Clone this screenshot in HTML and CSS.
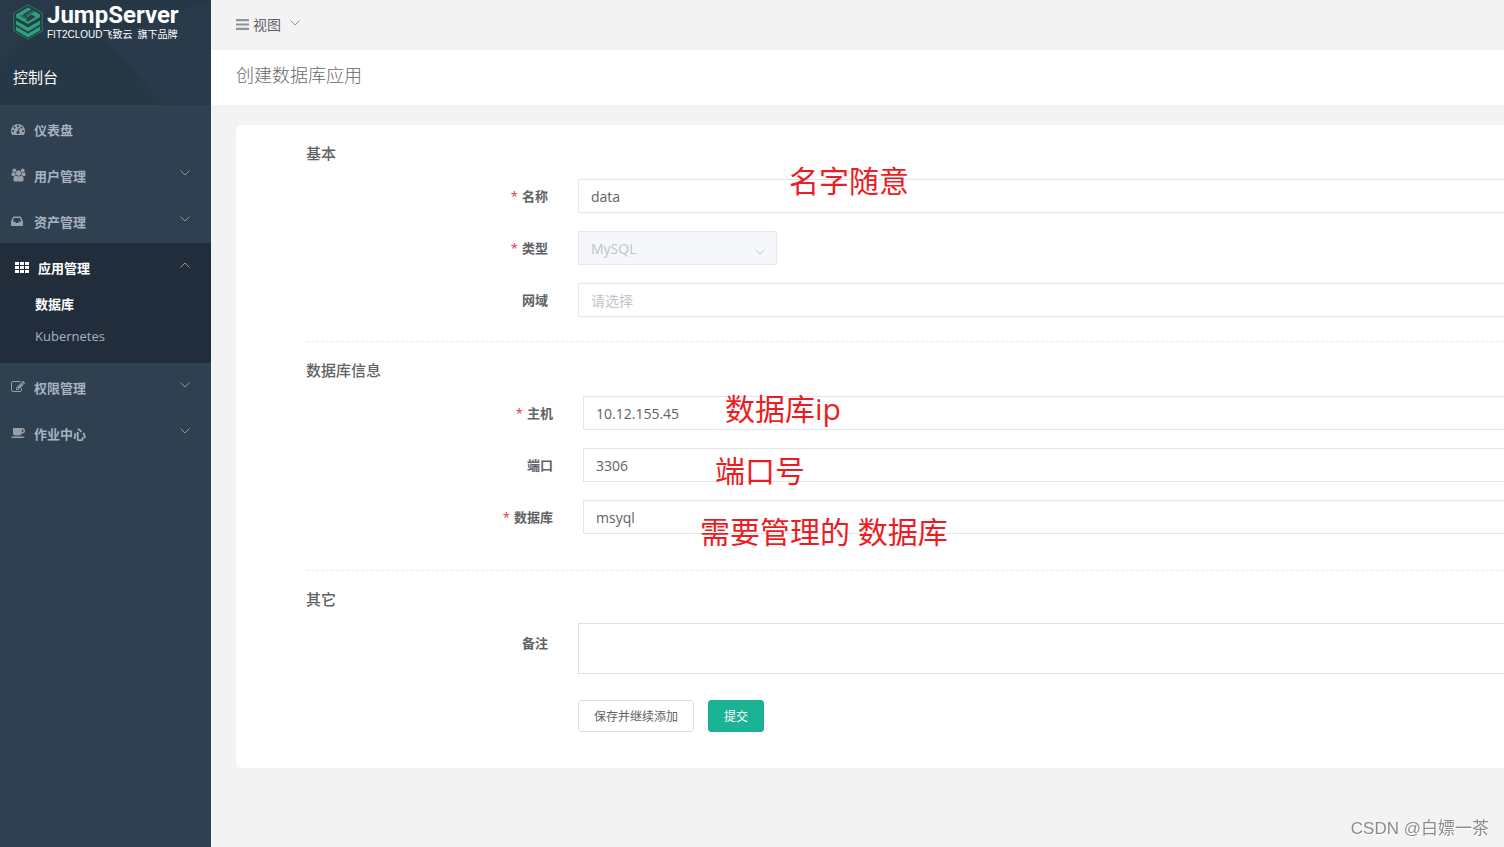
FILE: index.html
```html
<!DOCTYPE html>
<html lang="zh-CN">
<head>
<meta charset="utf-8">
<title>JumpServer</title>
<link rel="stylesheet" href="styles.css">
</head>
<body>
<svg class="defs" aria-hidden="true">
  <symbol id="chevron" viewBox="0 0 10 6"><path d="M.5.5 5 5 9.500.5" fill="none" stroke="currentColor"/></symbol>
</svg>
<div class="app">
  <aside class="sidebar">
    <div class="brand">
      <svg class="facets" viewBox="0 0 211 105" preserveAspectRatio="none" aria-hidden="true">
        <path d="M105 40 128 30 211 0V105H165Z" fill="#2b3c4b" opacity=".7"/>
        <path d="M0 0H60L0 66Z" fill="#2b3c4b" opacity=".5"/>
      </svg>
      <div class="logo">
        <svg class="logo-mark" viewBox="0 0 30 36" aria-hidden="true">
          <path d="M15 .7 29.300 9V27L15 35.300.7 27V9Z" fill="#22413f" stroke="#2a7667"/>
          <g fill="#2f9e82">
            <path d="M3 10.500 15 3.500 18.500 5.500 9 11 15 14.500 12 16.500 3 11.500Z"/>
            <path d="M20 6.500 27 10.500V13L15 20 3 13.500V11.500L15 17.500 22.500 13 18.500 10.500 14.500 13 12 11.500 20 6.500Z"/>
            <path d="M3 16.500 15 23.500 27 16.500V20.500L15 27.500 3 20.500Z"/>
            <path d="M3 22.500 15 29.500 27 22.500V26.500L15 33.500 3 26.500Z"/>
          </g>
          <path d="M7.500 11.500 15 15.500M12.500 12.500 21.500 7" stroke="#22413f"/>
        </svg>
        <div class="logo-text">
          <strong class="logo-name">JumpServer</strong>
          <span class="logo-sub"><span>FIT2CLOUD飞致云</span><span>旗下品牌</span></span>
        </div>
      </div>
      <div class="console">控制台</div>
    </div>
    <nav class="menu">
      <a class="item" href="#">
        <svg class="icon" viewBox="0 0 1792 1792"><path d="M384 1152q0-53-37.500-90.500t-90.500-37.500-90.500 37.500-37.500 90.500 37.500 90.500 90.500 37.500 90.500-37.500 37.500-90.500zm192-448q0-53-37.500-90.500t-90.500-37.500-90.500 37.500-37.500 90.500 37.500 90.500 90.500 37.500 90.500-37.500 37.500-90.500zm428 481l101-382q6-26-7.500-48.500t-38.500-29.500-48 6.500-30 39.500l-101 382q-60 5-107 43.500t-63 98.500q-20 77 20 146t117 89 146-20 89-117q16-60-6-117t-72-91zm660-33q0-53-37.500-90.500t-90.500-37.500-90.500 37.500-37.500 90.500 37.500 90.500 90.500 37.500 90.500-37.500 37.500-90.500zm-640-640q0-53-37.500-90.500t-90.500-37.500-90.500 37.500-37.500 90.500 37.500 90.500 90.500 37.500 90.500-37.500 37.500-90.500zm448 192q0-53-37.500-90.500t-90.500-37.500-90.500 37.500-37.500 90.500 37.500 90.500 90.500 37.500 90.500-37.500 37.500-90.500zm320 448q0 261-141 483-19 29-54 29h-1402q-35 0-54-29-141-221-141-483 0-182 71-348t191-286 286-191 348-71 348 71 286 191 191 286 71 348z"/></svg>
        <span>仪表盘</span>
      </a>
      <a class="item" href="#">
        <svg class="icon wide" viewBox="0 0 2048 1792"><path d="M657 896q-162 5-265 128h-134q-82 0-138-40.500t-56-118.500q0-353 124-353 6 0 43.500 21t97.500 42.500 119 21.500q67 0 133-23-5 37-5 66 0 139 81 256zm1071 637q0 120-73 189.500t-194 69.500h-874q-121 0-194-69.500t-73-189.500q0-53 3.500-103.500t14-109 26.500-108.500 43-97.500 62-81 85.500-53.500 111.500-20q10 0 43 21.500t73 48 107 48 135 21.500 135-21.500 107-48 73-48 43-21.500q61 0 111.500 20t85.500 53.500 62 81 43 97.500 26.500 108.500 14 109 3.500 103.500zm-1024-1277q0 106-75 181t-181 75-181-75-75-181 75-181 181-75 181 75 75 181zm704 384q0 159-112.500 271.500t-271.500 112.500-271.500-112.500-112.500-271.500 112.500-271.500 271.500-112.500 271.500 112.500 112.500 271.500zm576 225q0 78-56 118.500t-138 40.500h-134q-103-123-265-128 81-117 81-256 0-29-5-66 66 23 133 23 59 0 119-21.500t97.500-42.500 43.500-21q124 0 124 353zm-128-609q0 106-75 181t-181 75-181-75-75-181 75-181 181-75 181 75 75 181z"/></svg>
        <span>用户管理</span>
        <svg class="chevron"><use href="#chevron"/></svg>
      </a>
      <a class="item" href="#">
        <svg class="icon" viewBox="0 0 14 14"><path fill-rule="evenodd" d="M2.700 2.500h6.600q.5 0 .7.500L12 7.500V11.500q0 .5-.5.500H.5q-.5 0-.5-.500V7.500L2 3q.2-.5.700-.5zM3.200 4 1.700 7.500H4l.8 1.600h2.400l.8-1.600h2.300L8.800 4z"/></svg>
        <span>资产管理</span>
        <svg class="chevron"><use href="#chevron"/></svg>
      </a>
      <div class="group">
        <a class="item active" href="#">
          <svg class="icon" viewBox="0 0 14 14"><path d="M0 2h4v3H0zM5 2h4v3H5zM10 2h4v3h-4zM0 6h4v3H0zM5 6h4v3H5zM10 6h4v3h-4zM0 10h4v3H0zM5 10h4v3H5zM10 10h4v3h-4z"/></svg>
          <span>应用管理</span>
          <svg class="chevron up"><use href="#chevron"/></svg>
        </a>
        <a class="sub current" href="#">数据库</a>
        <a class="sub" href="#">Kubernetes</a>
      </div>
      <a class="item" href="#">
        <svg class="icon" viewBox="0 0 1792 1792"><path d="M888 1184l116-116-152-152-116 116v56h96v96h56zm440-720q-16-16-33 1l-350 350q-17 17-1 33t33-1l350-350q17-17 1-33zm80 594v190q0 119-84.500 203.500t-203.500 84.500h-832q-119 0-203.500-84.500t-84.500-203.500v-832q0-119 84.500-203.500t203.500-84.500h832q63 0 117 25 15 7 18 23 3 17-9 29l-49 49q-14 14-32 8-23-6-45-6h-832q-66 0-113 47t-47 113v832q0 66 47 113t113 47h832q66 0 113-47t47-113v-126q0-13 9-22l64-64q15-15 35-7t20 29zm-96-738l288 288-672 672h-288v-288zm444 132l-92 92-288-288 92-92q28-28 68-28t68 28l152 152q28 28 28 68t-28 68z"/></svg>
        <span>权限管理</span>
        <svg class="chevron"><use href="#chevron"/></svg>
      </a>
      <a class="item" href="#">
        <svg class="icon" viewBox="0 0 14 14"><path fill-rule="evenodd" d="M2 2h9.300a2.700 2.700 0 0 1 0 5.400h-.5Q10.500 9.500 8.500 9.500H4Q2 9.500 2 7.500zM10.800 3.500v2.400h.5a1.200 1.200 0 0 0 0-2.400zM0 10.500h13.500Q13 12 11.500 12H2Q.5 12 0 10.500z"/></svg>
        <span>作业中心</span>
        <svg class="chevron"><use href="#chevron"/></svg>
      </a>
    </nav>
  </aside>
  <div class="main">
    <header class="topbar">
      <button class="view-switch" type="button">
        <svg class="bars" viewBox="0 0 12 10"><path d="M0 0h12v2H0zM0 4h12v2H0zM0 8h12v2H0z"/></svg>
        <span>视图</span>
        <svg class="chevron"><use href="#chevron"/></svg>
      </button>
    </header>
    <div class="page-title"><h1>创建数据库应用</h1></div>
    <main class="content">
      <form class="card">
        <section class="section">
          <h2>基本</h2>
          <div class="row">
            <label class="required" for="name">名称</label>
            <input id="name" type="text" value="data">
            <span class="note note-name">名字随意</span>
          </div>
          <div class="row">
            <label class="required" for="type">类型</label>
            <div class="select">
              <select id="type" disabled><option>MySQL</option></select>
              <svg class="chevron"><use href="#chevron"/></svg>
            </div>
          </div>
          <div class="row">
            <label for="domain">网域</label>
            <input id="domain" type="text" placeholder="请选择">
          </div>
        </section>
        <section class="section database">
          <h2>数据库信息</h2>
          <div class="row">
            <label class="required" for="host">主机</label>
            <input id="host" type="text" value="10.12.155.45">
            <span class="note note-host">数据库ip</span>
          </div>
          <div class="row">
            <label for="port">端口</label>
            <input id="port" type="text" value="3306">
            <span class="note note-port">端口号</span>
          </div>
          <div class="row">
            <label class="required" for="db">数据库</label>
            <input id="db" type="text" value="msyql">
            <span class="note note-db">需要管理的 数据库</span>
          </div>
        </section>
        <section class="section other">
          <h2>其它</h2>
          <div class="row">
            <label for="comment">备注</label>
            <textarea id="comment"></textarea>
          </div>
          <div class="actions">
            <button class="btn" type="button">保存并继续添加</button>
            <button class="btn primary" type="submit">提交</button>
          </div>
        </section>
      </form>
    </main>
  </div>
</div>
<div class="watermark">CSDN @白嫖一茶</div>
</body>
</html>
```

FILE: styles.css
```css
* { box-sizing: border-box; }

body {
  margin: 0;
  overflow-x: hidden;
  background: #f3f3f3;
  color: #606266;
  font-family: "Open Sans", "Noto Sans CJK SC", sans-serif;
  font-size: 13px;
}

a { color: inherit; text-decoration: none; }
button, input, select, textarea { font: inherit; color: inherit; }
.defs { position: absolute; width: 0; height: 0; }

.app { display: flex; min-height: 100vh; }

/* Sidebar */
.sidebar { flex: 0 0 211px; background: #2f4050; }
.brand {
  position: relative;
  height: 105px;
  padding: 3px 13px 0;
  background: #263746;
  color: #fff;
}
.facets { position: absolute; inset: 0; width: 100%; height: 100%; }
.logo { position: relative; display: flex; gap: 4px; }
.logo-mark { width: 30px; height: 36px; margin-top: 1px; }
.logo-text { display: flex; flex-direction: column; }
.logo-name {
  font-family: Roboto, sans-serif;
  font-size: 24px;
  line-height: 25px;
  font-weight: 700;
}
.logo-sub {
  display: flex;
  gap: 5px;
  font: 10px/14px "Liberation Sans", "Noto Sans CJK SC", sans-serif;
}
.console { position: relative; margin-top: 25px; font-size: 15px; line-height: 20px; }

.item {
  display: flex;
  align-items: center;
  height: 46px;
  padding: 2px 21px 0 11px;
  gap: 9px;
  color: #a7b1c2;
  font-weight: 600;
}
.icon { width: 14px; height: 14px; fill: #9a9ea5; }
.icon.wide { width: 15px; margin-right: -1px; }
.chevron { width: 10px; height: 6px; color: #909399; }
.item .chevron { margin: 0 0 4px auto; }
.chevron.up { transform: scaleY(-1); }
.group { height: 120px; background: #222d3c; }
.item.active { padding-left: 15px; color: #fff; }
.active .icon { fill: #fff; }
.sub {
  display: block;
  padding-left: 35px;
  line-height: 32px;
  color: #a7b1c2;
  font-weight: 500;
}
.sub.current { margin-top: -1px; color: #fff; font-weight: 600; }

/* Header */
.main { flex: 1; min-width: 0; }
.topbar { display: flex; height: 50px; padding-left: 25px; background: #f3f3f3; }
.view-switch {
  display: flex;
  align-items: center;
  gap: 4px;
  height: 48px;
  padding: 0;
  border: 0;
  background: none;
  font-size: 14px;
}
.bars { width: 13px; height: 11px; fill: #909399; }
.view-switch .chevron { margin: 0 0 2px 5px; }
.page-title { height: 55px; padding: 11px 25px; background: #fff; }
.page-title h1 {
  margin: 0;
  color: #676a6c;
  font-size: 18px;
  line-height: 28px;
  font-weight: 300;
}

/* Form card, running to the right edge of the window */
.content { padding: 20px 0 20px 25px; }
.card { padding: 0 0 36px 70px; border-radius: 5px 0 0 5px; background: #fff; }
.section { padding-top: 18px; }
.section + .section { border-top: 1px dashed #e7eaec; }
.section h2 { margin: 0 0 16px; font-size: 15px; line-height: 20px; font-weight: 500; }
.row {
  position: relative;
  display: grid;
  grid-template-columns: 242px minmax(0, 1fr);
  column-gap: 30px;
  margin-bottom: 18px;
}
.section .row:last-child { margin-bottom: 24px; }
.database .row { grid-template-columns: 247px minmax(0, 1fr); }
.database .row:last-child { margin-bottom: 36px; }
.other h2 { margin-bottom: 14px; }
.other .row { margin-bottom: 26px; }
.row label { text-align: right; line-height: 34px; height: 34px; font-weight: 600; }
.other .row label { line-height: 40px; }
.required::before { content: "*"; margin-right: 4px; color: #ed5565; }

input, textarea {
  width: 100%;
  border: 1px solid #e5e6e7;
  border-right: 0;
  background: #fff;
  outline: 0;
  font-size: 14px;
}
input { height: 34px; padding: 1px 12px; }
input::placeholder { color: #c0c4cc; }
textarea { display: block; height: 51px; padding: 5px 12px; border-color: #dcdfe6; resize: none; }
.select { position: relative; width: 199px; }
.select select {
  width: 100%;
  height: 34px;
  padding: 1px 12px;
  border: 1px solid #e4e7ed;
  border-radius: 0;
  background: #f5f7fa;
  color: #c0c4cc;
  font-size: 14px;
  appearance: none;
  opacity: 1;
}
.select .chevron { position: absolute; right: 12px; top: 18px; color: #c0c4cc; }

.actions { display: flex; gap: 14px; padding-left: 272px; }
.btn {
  height: 32px;
  padding: 0 15px;
  border: 1px solid #dcdfe6;
  border-radius: 3px;
  background: #fff;
  font-size: 12px;
}
.btn.primary { border-color: #1ab394; background: #1ab394; color: #fff; }

/* Handwritten-style remarks laid over the fields */
.note {
  position: absolute;
  color: #ed1c24;
  font-size: 30px;
  line-height: 40px;
  white-space: nowrap;
}
.note-name { left: 483px; top: -18px; }
.note-host { left: 419px; top: -7px; }
.note-port { left: 409px; top: 3px; }
.note-db { left: 394px; top: 12px; }

.watermark {
  position: fixed;
  right: 15px;
  bottom: 6px;
  color: #8c8c8c;
  font: 17px/24px "Liberation Sans", "Noto Sans CJK SC", sans-serif;
  text-shadow: 1px 1px 0 #fff;
}
```
